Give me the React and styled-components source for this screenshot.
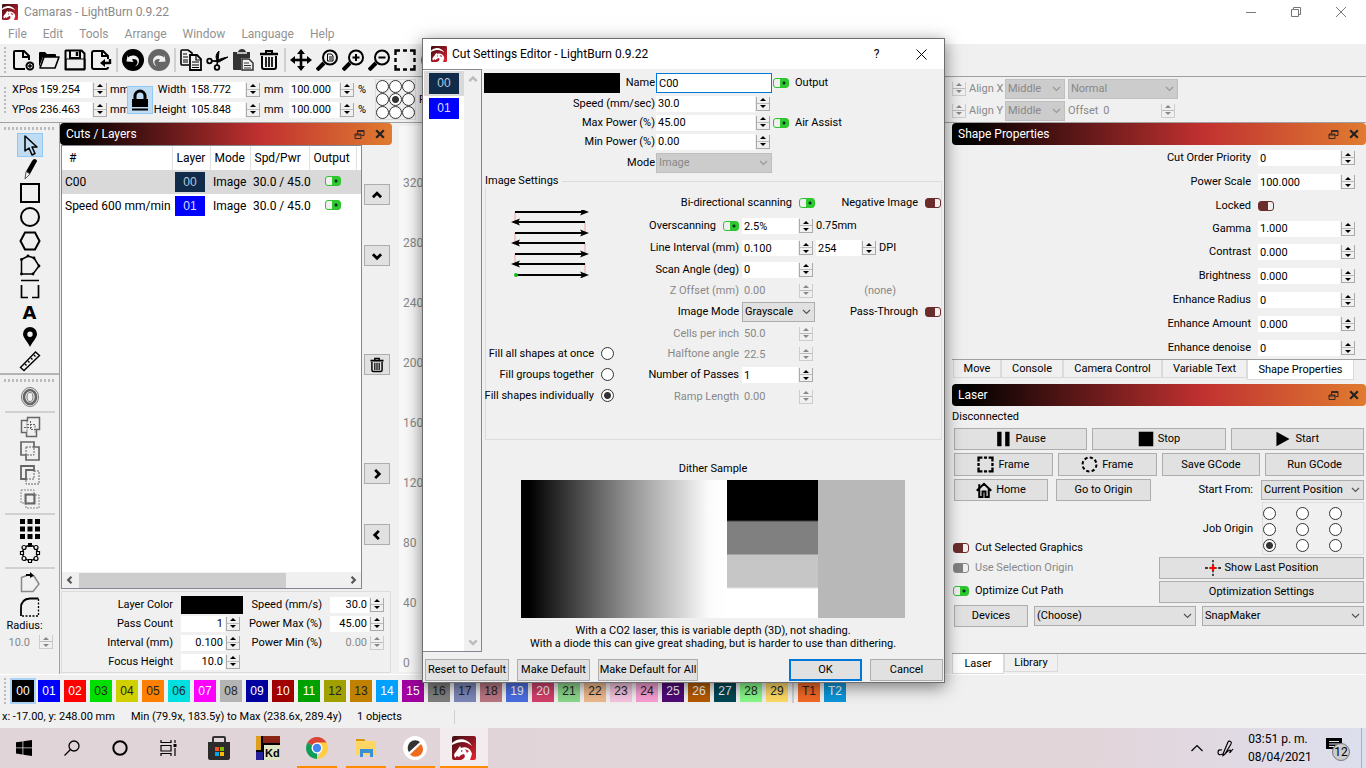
import React from 'react';
import styled, {createGlobalStyle, css} from 'styled-components';

const GlobalStyle = createGlobalStyle`
  *, *::before, *::after {
    box-sizing: border-box;
  }

  body {
    margin: 0;
    background: #f0f0f0;
    color: #000;
    font-family: Roboto, "Noto Sans", sans-serif;
    font-size: 11px;
    line-height: 14px;
  }

  input, select, button {
    font: inherit;
    color: inherit;
    margin: 0;
  }

  svg {
    display: block;
    flex: none;
  }
`;

const palette = [
    ['00', '#000000', '#fff'],
    ['01', '#0000ff', '#fff'],
    ['02', '#ff0000', '#fff'],
    ['03', '#00e000', '#222'],
    ['04', '#d0d000', '#222'],
    ['05', '#ff8000', '#222'],
    ['06', '#00e0e0', '#222'],
    ['07', '#ff00ff', '#fff'],
    ['08', '#b4b4b4', '#222'],
    ['09', '#0000a0', '#fff'],
    ['10', '#a00000', '#fff'],
    ['11', '#00a000', '#fff'],
    ['12', '#a0a000', '#222'],
    ['13', '#c08000', '#222'],
    ['14', '#00a0ff', '#fff'],
    ['15', '#a000a0', '#fff'],
    ['16', '#808080', '#222'],
    ['17', '#7d87b9', '#222'],
    ['18', '#bb7784', '#222'],
    ['19', '#4a6fe3', '#fff'],
    ['20', '#d33f6a', '#fff'],
    ['21', '#8cd78c', '#222'],
    ['22', '#f0b98d', '#222'],
    ['23', '#f6c4e1', '#222'],
    ['24', '#fa9ed4', '#222'],
    ['25', '#500a78', '#fff'],
    ['26', '#b45a00', '#fff'],
    ['27', '#004754', '#fff'],
    ['28', '#86fa88', '#222'],
    ['29', '#ffdb66', '#222'],
];

const toolPalette = [
    ['T1', '#f36926', '#222'],
    ['T2', '#0c96d9', '#fff'],
];

/* ---------- icons ---------- */

const line = {fill: 'none', stroke: 'currentColor', strokeWidth: 2};

const glyphs = {
    newFile: (
        <g {...line}>
            <path d="M13 20H4a2 2 0 0 1-2-2V3a1 1 0 0 1 1-1h9l5 5v4"/>
            <path d="M11 2v6h6"/>
            <circle cx="18" cy="17" r="3.5"/>
            <path d="M18 15v4M16 17h4" strokeWidth="1.4"/>
        </g>
    ),
    open: (
        <g>
            <path d="M1 18V4q0-1 1-1h5l2 2h8q1 0 1 1v2H5z" fill="currentColor"/>
            <path d="M2 19 6 8h15l-4 11z" {...line} strokeWidth="1.6" strokeLinejoin="round"/>
        </g>
    ),
    save: (
        <g {...line}>
            <path d="M2 1.5h15.5l3 3v16h-19V2z" strokeLinejoin="round"/>
            <path d="M2 10h19v10H2z" fill="none" strokeWidth="1"/>
            <path d="M6 2v7h10V2"/>
            <path d="M13 3v4" strokeWidth="2.5"/>
        </g>
    ),
    importFile: (
        <g {...line}>
            <path d="M18 10V7l-5-5H4a2 2 0 0 0-2 2v14a2 2 0 0 0 2 2h12a2 2 0 0 0 2-2"/>
            <path d="M12 2v5h6"/>
            <path d="M13 14h7M20 10v5" strokeWidth="2.4"/>
            <path d="m15 10-5 4 5 4z" fill="currentColor" stroke="none"/>
        </g>
    ),
    undo: (
        <g>
            <circle cx="11" cy="11" r="11" fill="currentColor"/>
            <path d="M6 8.5C9 5 17 6 17 12c0 3-2 5-4 5.5 6-5 0-9-3-7l1.5 2.5-7-.5 1-6.5z" fill="#f0f0f0"/>
        </g>
    ),
    redo: (
        <g>
            <circle cx="11" cy="11" r="11" fill="#666"/>
            <path d="M16 8.5C13 5 5 6 5 12c0 3 2 5 4 5.5-6-5 0-9 3-7L10.5 13l7-.5-1-6.5z" fill="#f0f0f0"/>
        </g>
    ),
    copy: (
        <g {...line} strokeWidth="1.6">
            <path d="M9 16H2q-1 0-1-1V2q0-1 1-1h6l4 3v2"/>
            <path d="M3 5h4M3 8h5M3 11h5M3 13h5" strokeWidth="1.2"/>
            <path d="M10 6h7l4 4v11H10z" strokeWidth="1.8"/>
            <path d="M16 6v5h5M12 13h7M12 16h7M12 18.5h7" strokeWidth="1.2"/>
        </g>
    ),
    cut: (
        <g {...line} strokeWidth="1.8">
            <circle cx="3.5" cy="12" r="2.3"/>
            <circle cx="11" cy="18.5" r="2.3"/>
            <path d="M6 12c5 0 9-3 16-4l-9 5-7-1" fill="currentColor" strokeWidth="1"/>
            <path d="M11 16V12l-1-4c0-3 2-5 3-6l-1 10-1 4" fill="currentColor" strokeWidth="1"/>
        </g>
    ),
    paste: (
        <g>
            <path d="M1 3h5q1-3 4-3t4 3h4v6h-9v12H2q-1 0-1-1z" fill="#333"/>
            <path d="M5 4h10" stroke="#f0f0f0" strokeWidth="1.5"/>
            <path d="M10 10h7l4 4v7H10z" fill="#f0f0f0" stroke="#333" strokeWidth="1.5"/>
            <path d="M12 14h5M12 16.5h7M12 19h7" stroke="#333" strokeWidth="1.2"/>
        </g>
    ),
    trash: (
        <g {...line}>
            <path d="M2 5h18" strokeWidth="2.5"/>
            <path d="M8 4V2h6v2M4 7v11q0 2 2 2h10q2 0 2-2V7"/>
            <path d="M8 8v10M11 8v10M14 8v10" strokeWidth="1.7"/>
        </g>
    ),
    move: (
        <g fill="currentColor">
            <path d="M9.7 4h2.6v14H9.7z"/>
            <path d="M4 9.7h14v2.6H4z"/>
            <path d="m11 0 4 5H7zM11 22l4-5H7zM0 11l5-4v8zM22 11l-5-4v8z"/>
        </g>
    ),
    zoomPage: (
        <g {...line}>
            <circle cx="14" cy="8.5" r="7"/>
            <path d="m8 14-7 7" strokeWidth="4"/>
            <path d="M11.5 5h4l1.5 2v5h-5.5zM13 8h3M13 10h3" strokeWidth="1"/>
        </g>
    ),
    zoomIn: (
        <g {...line}>
            <circle cx="14" cy="8.5" r="7"/>
            <path d="m8 14-7 7" strokeWidth="4"/>
            <path d="M14 5v7M10.5 8.5h7"/>
        </g>
    ),
    zoomOut: (
        <g {...line}>
            <circle cx="14" cy="8.5" r="7"/>
            <path d="m8 14-7 7" strokeWidth="4"/>
            <path d="M10.5 8.5h7"/>
        </g>
    ),
    frame: (
        <path d="M1.5 6V1.5H6M9 1.5h4M16 1.5h4.5V6M20.5 9v4M20.5 16v4.5H16M13 20.5H9M6 20.5H1.5V16M1.5 13V9"
              {...line} strokeWidth="2.4"/>
    ),
    camera: <circle cx="11" cy="11" r="10" fill="#666"/>,
    lock: (
        <g>
            <path d="M3 10h16v8H3z" fill="currentColor"/>
            <path d="M6 11V7a5 5 0 0 1 10 0v4" {...line} strokeWidth="3"/>
            <path d="M3 20.5h16" stroke="currentColor" strokeWidth="2"/>
        </g>
    ),
    cursor: <path d="M6 2v15l4-3 3 7 3-1.5-3-6.5h5z" {...line} strokeWidth="1.5" strokeLinejoin="round"/>,
    pencil: (
        <g>
            <path d="M13 3q2-3 4-1.5T17 5l-6 11-4-2.5z" fill="currentColor"/>
            <path d="m7 13.5 4 2.5-5 5z" fill="none" stroke="#555" strokeWidth="1"/>
        </g>
    ),
    square: <path d="M2 2h18v18H2z" {...line}/>,
    circle: <circle cx="11" cy="11" r="9" {...line}/>,
    hexagon: <path d="M1.5 11 6 2.5h10l4.5 8.5-4.5 8.5H6z" {...line}/>,
    polygon: (
        <g>
            <path d="M2.5 5.5 9 2l6 2 5 8-6 8H2.5z" {...line} strokeWidth="1.5"/>
            <g fill="currentColor">
                <circle cx="2.5" cy="5.5" r="1.4"/>
                <circle cx="9" cy="2" r="1.4"/>
                <circle cx="15" cy="4" r="1.4"/>
                <circle cx="20" cy="12" r="1.4"/>
                <circle cx="14" cy="20" r="1.4"/>
                <circle cx="2.5" cy="20" r="1.4"/>
            </g>
        </g>
    ),
    frameTool: <path d="M2 2.5h18M2.5 7v12.5H9M13 19.5h6.5V7" {...line} strokeWidth="1.7"/>,
    pin: (
        <path d="M11 1a7 7 0 0 0-7 7c0 4 5 8 7 13 2-5 7-9 7-13a7 7 0 0 0-7-7zm0 4.5a2.7 2.7 0 1 1 0 5.4 2.7 2.7 0 0 1 0-5.4z"
              fill="currentColor" fillRule="evenodd"/>
    ),
    ruler: (
        <g {...line} strokeWidth="1.4">
            <path d="m1.5 17.5 15-15.5 4 3.5-15.5 15z"/>
            <path d="m6 14 1.5 1.5M9 11l1.5 1.5M12 8l1.5 1.5M15 5l1.5 1.5"/>
        </g>
    ),
    offset: (
        <g fill="none" stroke="#777">
            <ellipse cx="11" cy="11" rx="8.5" ry="9.5"/>
            <ellipse cx="11" cy="11" rx="6" ry="7" strokeWidth="2.6" stroke="#666"/>
            <ellipse cx="11" cy="11" rx="3" ry="4.5"/>
        </g>
    ),
    weld: (
        <g fill="none" stroke="#666">
            <path d="M2.5 4.5h6v-3h12v12h-3v7h-10v-4h-5z" strokeWidth="1.5"/>
            <path d="M8 4.5v12M8 8.5h8v8M11.5 5v8.5H17M5 11.5h9" strokeDasharray="2 1"/>
        </g>
    ),
    union: (
        <g fill="none" stroke="#666">
            <path d="M2 2h13v5h5v13H7v-5H2z" strokeWidth="1.7"/>
            <path d="M7 7h8v8H7z" strokeDasharray="2 1"/>
        </g>
    ),
    subtract: (
        <g fill="none" stroke="#666">
            <path d="M2 2h13v4H7v9H2z" strokeWidth="1.8"/>
            <path d="M15 7h5v13H7v-5h8z" strokeDasharray="2 1"/>
        </g>
    ),
    intersect: (
        <g fill="none" stroke="#666">
            <path d="M2 2h13v13H2zM7 7h13v13H7z" strokeDasharray="2 1" stroke="#888"/>
            <path d="M6.5 6.5h9v9h-9z" strokeWidth="2"/>
        </g>
    ),
    grid: (
        <path d="M1 1h5v5H1zM8.5 1h5v5h-5zM16 1h5v5h-5zM1 8.5h5v5H1zM8.5 8.5h5v5h-5zM16 8.5h5v5h-5zM1 16h5v5H1zM8.5 16h5v5h-5zM16 16h5v5h-5z"
              fill="currentColor"/>
    ),
    radial: (
        <g>
            <circle cx="11" cy="11" r="7.5" {...line} strokeWidth="1.4"/>
            <g fill="#f0f0f0" stroke="currentColor" strokeWidth="1.2">
                <circle cx="5" cy="5.5" r="2"/>
                <circle cx="17" cy="5.5" r="2"/>
                <circle cx="5" cy="16.5" r="2"/>
                <circle cx="17" cy="16.5" r="2"/>
                <path d="M1.5 9.5h3v3h-3zM17.5 9.5h3v3h-3zM9.5 17.5h3v3h-3z"/>
            </g>
            <path d="M9 1h4v4H9z" fill="currentColor"/>
        </g>
    ),
    startPoint: (
        <g>
            <path d="M2.5 5.5 9 3l6 1 5 8-6 7.5H2.5z" fill="none" stroke="#888" strokeWidth="1.5"/>
            <path d="M7 2h4V0l4 3.5-4 2.5V4H7z" fill="currentColor"/>
        </g>
    ),
    corner: (
        <g {...line} strokeWidth="1.5">
            <path d="M2 20v-8Q2 3 11 2.5h8.5" strokeWidth="1.8"/>
            <path d="M19.5 3v17H3" strokeDasharray="2 1.5" strokeWidth="1.3"/>
        </g>
    ),
    up: <path d="m6.5 13.5 4.5-4.5 4.5 4.5" {...line} strokeWidth="3"/>,
    down: <path d="m6.5 9 4.5 4.5L15.5 9" {...line} strokeWidth="3"/>,
    right: <path d="m9 6.5 4.5 4.5L9 15.5" {...line} strokeWidth="3"/>,
    left: <path d="M13 6.5 8.5 11l4.5 4.5" {...line} strokeWidth="3"/>,
    float: (
        <g fill="none" stroke="#222" strokeWidth="1.8">
            <path d="M7 10V3h13v10h-5"/>
            <path d="M2 10h12v9H2zM7 5h13M2 12h12"/>
        </g>
    ),
    close: <path d="m4 4 14 14M18 4 4 18" stroke="#222" strokeWidth="4" fill="none"/>,
    pause: <path d="M3 1h6v20H3zM14 1h6v20h-6z" fill="currentColor"/>,
    stop: <path d="M1 1h20v20H1z" fill="currentColor"/>,
    play: <path d="m2 1 18 10L2 21z" fill="currentColor"/>,
    frameBox: <path d="M2 7V2h5M9 2h4M15 2h5v5M20 15v5h-5M13 20H9M7 20H2v-5M2 13V9M20 13V9" {...line} strokeWidth="3"/>,
    frameRound: <circle cx="11" cy="11" r="9" {...line} strokeWidth="2.6" strokeDasharray="4.2 2.87"/>,
    home: (
        <g {...line} strokeWidth="2.8">
            <path d="M1 12 11 2.5 21 12M4.5 10v10.5H9V13h4v7.5h4.5V10"/>
            <path d="M4.5 3v6"/>
        </g>
    ),
    target: (
        <g fill="none" stroke="currentColor" strokeWidth="1.8">
            <path d="M0 11h4M6 11h3M13 11h3M18 11h4M11 0v3M11 5v3M11 14v3M11 19v3"/>
            <path d="M7 11h8M11 7v8" stroke="red" strokeWidth="3"/>
        </g>
    ),
};

const Icon = ({name, size = 22}) => (
    <svg width={size} height={size} viewBox="0 0 22 22" aria-hidden="true">{glyphs[name]}</svg>
);

const Logo = ({size = 16}) => (
    <svg width={size} height={size} viewBox="0 0 24 24" aria-hidden="true">
        <defs>
            <linearGradient id="logoRed" x1="0" x2="1" y1="0" y2="1">
                <stop offset="0" stopColor="#3c1014"/>
                <stop offset="0.5" stopColor="#8c1522"/>
                <stop offset="1" stopColor="#ee2230"/>
            </linearGradient>
        </defs>
        <rect width="24" height="24" rx="2" fill="url(#logoRed)"/>
        <path d="M0 7C6 1 16 2 20 10 14 5 8 5 0 9z" fill="#fff"/>
        <path d="M2 19c1-3 3-4 4-6l2-3 1 2c5-2 10 1 11 6l-2 6H9c3-1 5-3 3-6l-3 1-2 2-2-1-2 2z" fill="#fff"/>
        <path d="m13 13 4 2-2 2zM9 14l2 1-2 1z" fill="#b82a3a"/>
    </svg>
);

const ScanPattern = () => {
    const rows = [2, 12, 23, 33, 44, 54, 65];
    return (
        <svg width="78" height="68" viewBox="0 0 78 68" aria-hidden="true">
            <path d="M4 2v10M74 12v11M4 23v10M74 33v11M4 44v10M74 54v11" stroke="#f5a0a0" fill="none"/>
            {rows.map((y, i) => (
                <g key={y}>
                    <path d={`M4 ${y}h70`} stroke="#000" strokeWidth="2"/>
                    <path d={i % 2 ? `m0 ${y} 9-3.5-2 3.5 2 3.5z` : `m78 ${y}-9-3.5 2 3.5-2 3.5z`}/>
                </g>
            ))}
            <circle cx="5" cy="65" r="2" fill="#1b1"/>
        </svg>
    );
};

/* ---------- shared controls ---------- */

const Label = styled.label`
  white-space: nowrap;
  text-align: ${(p) => p.$align || 'right'};
  width: ${(p) => p.$width || 'auto'};
  color: ${(p) => (p.$off ? '#888' : 'inherit')};
`;

const SpinWrap = styled.div`
  display: flex;
  align-items: center;
  gap: 1px;
  width: ${(p) => p.$width};
  color: ${(p) => (p.$off ? '#888' : '#000')};
`;

const SpinInput = styled.input`
  flex: 1;
  min-width: 0;
  width: 0;
  height: 16px;
  padding: 0 2px;
  border: 0;
  background: ${(p) => (p.disabled ? 'transparent' : '#fff')};
  text-align: ${(p) => p.$align || 'left'};
  outline: none;
`;

const Arrows = styled.div`
  display: flex;
  flex-direction: column;
  flex: none;
  width: 14px;
  height: 14px;
  border: 1px solid ${(p) => (p.$off ? '#ccc' : '#aaa')};
  border-top: 0;
`;

const ArrowButton = styled.button`
  flex: 1;
  display: flex;
  align-items: center;
  justify-content: center;
  padding: 0;
  border: 0;
  background: #f0f0f0;

  & + & {
    border-top: 1px solid #bbb;
  }
`;

const Stepper = ({off}) => (
    <Arrows $off={off}>
        <ArrowButton disabled={off} aria-label="Increase">
            <svg width="6" height="3" viewBox="0 0 6 3"><path d="M0 3 3 0l3 3z" fill="currentColor"/></svg>
        </ArrowButton>
        <ArrowButton disabled={off} aria-label="Decrease">
            <svg width="6" height="3" viewBox="0 0 6 3"><path d="m0 0 3 3 3-3z" fill="currentColor"/></svg>
        </ArrowButton>
    </Arrows>
);

const SpinBox = ({id, label, value, width, align, off}) => (
    <SpinWrap $width={width} $off={off}>
        <SpinInput id={id} aria-label={label} defaultValue={value} disabled={off} $align={align}/>
        <Stepper off={off}/>
    </SpinWrap>
);

const SelectWrap = styled.div`
  display: grid;
  align-items: center;
  width: ${(p) => p.$width || 'auto'};
  flex: ${(p) => (p.$width ? 'none' : 1)};
  color: ${(p) => (p.$off ? '#888' : '#000')};

  & > select, & > svg {
    grid-area: 1 / 1;
  }

  & > svg {
    justify-self: end;
    margin-right: 4px;
    pointer-events: none;
  }
`;

const SelectBox = styled.select`
  appearance: none;
  width: 100%;
  height: 20px;
  padding: 0 2px;
  border: 1px solid ${(p) => (p.disabled ? '#bfbfbf' : '#adadad')};
  border-radius: 0;
  background: ${(p) => (p.disabled ? '#ccc' : '#e1e1e1')};
  opacity: 1;
`;

const Select = ({id, label, value, width, off}) => (
    <SelectWrap $width={width} $off={off}>
        <SelectBox id={id} aria-label={label} disabled={off}>
            <option>{value}</option>
        </SelectBox>
        <svg width="9" height="6" viewBox="0 0 9 6">
            <path d="m1 1 3.5 3.5L8 1" fill="none" stroke={off ? '#999' : '#555'} strokeWidth="1.2"/>
        </svg>
    </SelectWrap>
);

const Toggle = styled.input.attrs({type: 'checkbox'})`
  appearance: none;
  flex: none;
  width: 16px;
  height: 10px;
  border: 1px solid ${(p) => (p.disabled ? '#888' : '#6b2c2c')};
  border-radius: 3px;
  background: linear-gradient(90deg, ${(p) => (p.disabled ? '#808080' : '#6b2c2c')} 9px, #f4eeee 9px);

  &:checked {
    border-color: #2fc42f;
    background:
      radial-gradient(circle at 10px 4px, #032 1px, transparent 2px),
      linear-gradient(90deg, #f0f0f0 6px, #2fc92f 6px);
  }
`;

const Radio = styled.input.attrs({type: 'radio'})`
  appearance: none;
  flex: none;
  width: 13px;
  height: 13px;
  border: 1px solid #333;
  border-radius: 50%;
  background: #fff;

  &:checked {
    background: radial-gradient(circle, #333 3px, #fff 4px);
  }
`;

const Button = styled.button`
  display: flex;
  align-items: center;
  justify-content: center;
  gap: 4px;
  flex: ${(p) => (p.$width ? 'none' : 1)};
  width: ${(p) => p.$width || 'auto'};
  height: ${(p) => p.$height || '22px'};
  padding: 0;
  border: ${(p) => (p.$primary ? '2px solid #0078d7' : '1px solid #adadad')};
  background: #e1e1e1;
  white-space: nowrap;
`;

const IconButton = styled.button`
  display: flex;
  align-items: center;
  justify-content: center;
  flex: none;
  width: 26px;
  height: 24px;
  padding: 0;
  border: 1px solid ${(p) => (p.$active ? '#90c8f6' : 'transparent')};
  background: ${(p) => (p.$active ? '#c0dcf3' : 'transparent')};
`;

const Swatch = styled.span`
  display: block;
  width: ${(p) => p.$width || '30px'};
  height: ${(p) => p.$height || '20px'};
  background: ${(p) => p.$color};
  color: ${(p) => p.$ink || '#fff'};
  font-family: "Liberation Sans", Arial, sans-serif;
  font-size: 12px;
  line-height: 20px;
  text-align: center;
`;

/* ---------- window frame ---------- */

const Screen = styled.div`
  position: relative;
  display: flex;
  flex-direction: column;
  min-height: 100vh;
  overflow: hidden;
`;

const TitleBar = styled.header`
  display: flex;
  align-items: center;
  height: 24px;
  padding: 0 3px 0 2px;
  gap: 6px;
  background: #fff;
  color: #8a8a8a;
  font-size: 12px;
`;

const WindowButtons = styled.div`
  display: flex;
  margin-left: auto;

  & button {
    display: flex;
    align-items: center;
    justify-content: center;
    width: 45px;
    height: 22px;
    padding: 0;
    border: 0;
    background: transparent;
  }
`;

const MenuBar = styled.nav`
  display: flex;
  align-items: center;
  gap: 16px;
  height: 20px;
  padding-left: 8px;
  background: #fff;
  color: #929292;
  font-size: 12px;

  & a {
    color: inherit;
    text-decoration: none;
  }
`;

const Toolbar = styled.div`
  display: flex;
  align-items: center;
  height: 33px;
  border-bottom: 1px solid #a0a0a0;
`;

const acrossHandle = css`
  width: 52px;
  height: 3px;
  margin: 4px 4px 3px;
  background: repeating-linear-gradient(90deg, #bbb 0 2px, transparent 2px 4px);
`;

const uprightHandle = css`
  width: 2px;
  height: 26px;
  margin: 0 4px;
  background: repeating-linear-gradient(#bbb 0 2px, transparent 2px 4px);
`;

const Handle = styled.i`
  flex: none;
  ${(p) => (p.$across ? acrossHandle : uprightHandle)}
`;

const acrossDivider = css`
  width: 50px;
  height: 2px;
  margin: 2px auto;
`;

const uprightDivider = css`
  width: 2px;
  height: 24px;
  margin: 0 2px;
`;

const Divider = styled.i`
  flex: none;
  background: #d0d0d0;
  ${(p) => (p.$across ? acrossDivider : uprightDivider)}
`;

const toolbarGroups = [
    ['newFile', 'open', 'save', 'importFile'],
    ['undo', 'redo'],
    ['copy', 'cut', 'paste', 'trash'],
    ['move', 'zoomPage', 'zoomIn', 'zoomOut', 'frame', 'camera'],
];

const TransformBar = styled.div`
  display: flex;
  align-items: center;
  height: 46px;
  border-bottom: 1px solid #a0a0a0;
`;

const Pair = styled.div`
  display: grid;
  grid-auto-rows: 20px;
  align-items: center;
  justify-items: ${(p) => p.$justify || 'start'};
  flex: none;
  width: ${(p) => p.$width};
  margin-left: ${(p) => p.$gap || 0};
`;

const LockButton = styled(IconButton)`
  height: 28px;
`;

const AnchorGrid = styled.div`
  display: grid;
  grid-template-columns: repeat(3, 13px);
  margin-left: 8px;
  outline: 1px solid #dcdcdc;
`;

const AlignGroup = styled.div`
  display: flex;
  flex-direction: column;
  gap: 2px;
  width: 414px;
  margin-left: auto;
  color: #888;
`;

const AlignRow = styled.div`
  display: flex;
  align-items: center;
  gap: 3px;
  height: 20px;
`;

/* ---------- left ---------- */

const Workspace = styled.main`
  display: flex;
  flex: 1;
`;

const ToolColumn = styled.aside`
  display: flex;
  flex-direction: column;
  flex: none;
  width: 60px;
  border-right: 1px solid #a0a0a0;
`;

const ToolSet = styled.div`
  display: flex;
  flex-direction: column;
  align-items: center;
  border-bottom: ${(p) => (p.$last ? 0 : '2px solid #b4b4b4')};
`;

const BigLetter = styled.b`
  font-family: "DejaVu Sans", sans-serif;
  font-size: 18px;
  line-height: 22px;
`;

const RadiusField = styled.div`
  display: flex;
  flex-direction: column;
  gap: 1px;
  width: 46px;
`;

const Dock = styled.section`
  display: flex;
  flex-direction: column;
  flex: none;
  width: ${(p) => p.$width};
`;

const DockHeader = styled.header`
  display: flex;
  align-items: center;
  gap: 9px;
  height: 22px;
  padding: 0 6px;
  border-radius: 4px;
  background: linear-gradient(90deg, #000 3%, #c03030 60%, #e07b30);
  color: #fff;
  font-size: 12px;

  & span {
    flex: 1;
  }

  & button {
    padding: 0;
    border: 0;
    background: transparent;
  }
`;

const DockTitle = ({children}) => (
    <DockHeader>
        <span>{children}</span>
        <button aria-label="Float"><Icon name="float" size={11}/></button>
        <button aria-label="Close"><Icon name="close" size={12}/></button>
    </DockHeader>
);

const LayersBody = styled.div`
  display: flex;
  flex: 1;
  margin-bottom: 2px;
`;

const ListBox = styled.div`
  display: flex;
  flex-direction: column;
  flex: 1;
  margin-left: 1px;
  border: 1px solid #828790;
  background: #fff;
`;

const LayerTable = styled.table`
  width: 100%;
  table-layout: fixed;
  border-collapse: collapse;
  font-size: 12px;

  & th, & td {
    height: 24px;
    padding: 0 3px;
    font-weight: normal;
    text-align: left;
    white-space: nowrap;
  }

  & th {
    padding-left: 4px;
    border-right: 1px solid #e0e0e0;
  }

  & th:first-child {
    padding-left: 7px;
  }

  & td:nth-child(5) {
    text-align: center;
  }
`;

const LayerRow = styled.tr`
  background: ${(p) => (p.$selected ? '#d9d9d9' : '#fff')};
`;

const ScrollTrack = styled.div`
  display: flex;
  align-items: center;
  gap: 1px;
  height: 16px;
  margin-top: auto;
  background: #f0f0f0;

  & button {
    width: 16px;
    padding: 0;
    border: 0;
    background: transparent;
    color: #555;
  }

  & i {
    width: 207px;
    height: 15px;
    margin-right: auto;
    background: #cdcdcd;
  }
`;

const OrderButtons = styled.div`
  display: flex;
  flex-direction: column;
  gap: 40px;
  width: 30px;
  padding: 39px 2px 0;
`;

const OrderButton = styled(Button)`
  flex: none;
  height: 21px;
  width: 26px;
  margin-top: ${(p) => (p.$apart ? '48px' : 0)};
`;

const QuickSettings = styled.div`
  display: grid;
  grid-template-columns: 111px 60px 73px 54px;
  column-gap: 8px;
  grid-auto-rows: 19px;
  align-items: center;
  margin: 0 1px 1px;
  padding: 3px 0 1px;
  border: 1px solid #dcdcdc;

  & > label, & > span:first-child {
    justify-self: end;
  }
`;

/* ---------- canvas ---------- */

const Canvas = styled.section`
  flex: 1;
  display: flex;
  flex-direction: column;
  gap: 42px;
  min-width: 200px;
  margin: 3px 8px 2px 7px;
  padding: 48px 4px 0;
  background: #f8f8f8;
  color: #888;
  font-size: 12px;
  line-height: 18px;
`;

/* ---------- right docks ---------- */

const PropertyList = styled.div`
  display: grid;
  grid-template-columns: 1fr 97px;
  column-gap: 7px;
  grid-template-rows: 24px 24px 23px 23px repeat(5, 24px);
  align-items: center;
  height: 214px;
  padding-top: 1px;
  padding-right: 11px;
`;

const Tabs = styled.div`
  display: flex;
  align-items: flex-start;
  height: ${(p) => p.$height};
  margin-top: ${(p) => (p.$bottom ? 'auto' : 0)};
  padding-left: ${(p) => p.$inset || 0};
  border-top: 1px solid #a0a0a0;
`;

const Tab = styled.button`
  width: ${(p) => p.$width};
  height: ${(p) => (p.$active ? '20px' : '18px')};
  padding: 0;
  border: 1px solid #dadada;
  border-top: 0;
  background: ${(p) => (p.$active ? '#fff' : 'transparent')};
`;

const LaserBody = styled.div`
  display: flex;
  flex-direction: column;
  padding: 4px 1px 0 0;
`;

const Status = styled.p`
  margin: 0 0 4px;
`;

const LaserRow = styled.div`
  display: flex;
  align-items: center;
  gap: ${(p) => p.$gap || '5px'};
  padding: 0 1px 0 2px;
  margin-bottom: ${(p) => p.$below || '3px'};
`;

const OriginRow = styled.div`
  display: grid;
  grid-template-columns: 205px 1fr;
  margin-bottom: 2px;
`;

const ToggleList = styled.div`
  display: grid;
  grid-template-rows: 20px 20px 25px;
  align-content: end;
  align-items: center;

  & label {
    display: flex;
    align-items: center;
    gap: 6px;
    padding-left: 1px;
  }
`;

const OriginSide = styled.div`
  display: flex;
  flex-direction: column;
  gap: 2px;
`;

const JobOrigin = styled.div`
  display: flex;
  align-items: center;
  justify-content: flex-end;
  gap: 9px;
  padding-right: 1px;
`;

const OriginGrid = styled.div`
  display: grid;
  grid-template-columns: repeat(3, 33px);
  grid-auto-rows: 16px;
  align-items: center;
  width: 102px;
  height: 53px;
  padding-top: 2px;
  border: 1px solid #dcdcdc;
`;

/* ---------- bottom ---------- */

const PaletteBar = styled.div`
  display: flex;
  align-items: center;
  gap: 4px;
  height: 31px;
  border-top: 1px solid #fff;
  padding-top: 2px;

  & > i {
    margin: 0;
  }

  & > i:first-child {
    margin: 0 2px 0 4px;
  }
`;

const ColorChip = styled.button`
  flex: none;
  width: 22px;
  height: 22px;
  padding: 0;
  border: 0;
  outline: ${(p) => (p.$active ? '2px solid #a9d2f5' : 'none')};
  background: ${(p) => p.$color};
  color: ${(p) => p.$ink};
  font-family: "Liberation Sans", Arial, sans-serif;
  font-size: 12px;
`;

const StatusBar = styled.footer`
  display: grid;
  grid-template-columns: 121px 218px 98px;
  align-items: center;
  gap: 8px;
  height: 23px;
  padding: 3px 0 3px 2px;

  & span:last-of-type {
    border-right: 1px solid #d0d0d0;
  }
`;

const Taskbar = styled.footer`
  display: flex;
  align-items: center;
  height: 40px;
  background: linear-gradient(90deg, #e0d4d9, #e2d5da 80%, #e0dbe6 93%, #dcdfee);
`;

const TaskSlot = styled.button`
  display: flex;
  align-items: center;
  justify-content: center;
  width: 48px;
  height: 40px;
  margin-left: ${(p) => p.$gap || 0};
  padding: 0;
  border: 0;
  background: ${(p) => (p.$active ? '#f2ecef' : 'transparent')};
  box-shadow: ${(p) => (p.$active ? 'inset 0 -2px #ff8c00' : 'none')};
`;

const RunningSlot = styled(TaskSlot)`
  width: 40px;
  margin: 0 4px 0 5px;
  box-shadow: inset 0 -2px #ff8c00;
`;

const Tray = styled.div`
  display: flex;
  align-items: center;
  gap: 14px;
  margin-left: auto;
  height: 40px;
  padding-right: 10px;
  margin-right: 4px;
  border-right: 1px solid #a9abc0;
`;

const Clock = styled.time`
  width: 60px;
  margin-right: 3px;
  font-size: 12px;
  line-height: 18px;
  text-align: center;
  white-space: nowrap;
`;

/* ---------- dialog ---------- */

const Dialog = styled.section`
  position: absolute;
  top: 38px;
  left: 422px;
  display: flex;
  flex-direction: column;
  width: 523px;
  border: 1px solid #6e6e6e;
  background: #f0f0f0;
  box-shadow: 0 4px 16px rgba(0, 0, 0, 0.5);
`;

const DialogTitle = styled.header`
  display: flex;
  align-items: center;
  gap: 5px;
  height: 30px;
  padding-left: 8px;
  background: #fff;
  font-size: 12px;
`;

const DialogBody = styled.div`
  display: flex;
  height: 583px;
`;

const LayerList = styled.div`
  display: flex;
  width: 59px;
  border: 1px solid #828790;
  border-left: 0;
  background: #fff;
`;

const LayerItems = styled.div`
  flex: 1;
  display: flex;
  flex-direction: column;
  padding-top: 1px;
`;

const LayerItem = styled.button`
  display: flex;
  width: 40px;
  height: 25px;
  margin-left: 1px;
  padding: 2px 5px;
  border: 0;
  background: ${(p) => (p.$selected ? '#d9d9d9' : 'transparent')};
`;

const ListScroll = styled.div`
  display: flex;
  flex-direction: column;
  justify-content: space-between;
  align-items: center;
  width: 17px;
  background: #f0f0f0;
  color: #bbb;
`;

const Settings = styled.div`
  display: flex;
  flex-direction: column;
  flex: 1;
  padding: 4px 2px 0;
`;

const TopSettings = styled.div`
  display: grid;
  grid-template-columns: 136px 34px 116px 1fr;
  grid-template-rows: 20px 21px 17px 21px 21px;
  align-items: center;
  column-gap: 1px;
`;

const WideLabel = styled(Label)`
  grid-column: 1 / 3;
`;

const NameInput = styled.input`
  height: 20px;
  width: 116px;
  padding: 0 2px;
  border: 1px solid #0078d7;
  background: #fff;
  outline: none;
`;

const CheckLabel = styled.label`
  display: flex;
  align-items: center;
  gap: 6px;
  white-space: nowrap;
`;

const Group = styled.fieldset`
  display: flex;
  height: 266px;
  min-width: 0;
  margin: 1px 0 0 1px;
  padding: 0;
  border: 1px solid #dcdcdc;

  & legend {
    margin-left: -1px;
    padding: 0 3px 0 0;
  }
`;

const FillColumn = styled.div`
  display: flex;
  flex-direction: column;
  align-items: flex-end;
  width: 128px;
  padding-top: 22px;

  & > svg {
    margin-right: 25px;
    margin-bottom: 65px;
  }

  & label {
    display: flex;
    align-items: center;
    gap: 7px;
    height: 21px;
    white-space: nowrap;
  }
`;

const ImageGrid = styled.div`
  flex: 1;
  display: grid;
  grid-template-rows: 25px 22px 22px 21px 21px 22px 21px 20px 22px 21px;
  align-content: start;
  padding-top: 2px;
`;

const ImageRow = styled.div`
  display: flex;
  align-items: center;
  gap: 3px;
`;

const RightCheck = styled.label`
  display: flex;
  align-items: center;
  gap: 7px;
  margin-left: auto;
`;

const OverscanLabel = styled.label`
  display: flex;
  justify-content: flex-end;
  align-items: center;
  gap: 7px;
  width: 125px;
`;

const BidiLabel = styled(OverscanLabel)`
  width: 201px;
`;

const Sample = styled.div`
  display: flex;
  flex-direction: column;
  align-items: center;
  padding-top: 22px;
  text-align: center;
  line-height: 13px;
`;

const DitherImage = styled.div`
  display: grid;
  grid-template-columns: 206px 91px 87px;
  height: 138px;
  margin: 5px 0 6px;
  background: #b8b8b8;

  & i:first-child {
    background: linear-gradient(90deg, #000 4%, #5e5e5e 35%, #999 55%, #d5d5d5 78%, #fbfbfb 91%, #fff);
  }

  & i:last-child {
    background: linear-gradient(#000 40px, #808080 42px 74px, #c6c6c6 75px 107px, #fff 109px);
  }
`;

const DialogButtons = styled.footer`
  display: flex;
  gap: 8px;
  padding: 7px 1px 1px 2px;

  & button:nth-child(4) {
    margin-left: auto;
  }
`;

const paramRows = [
    ['Scan Angle (deg)', '0', false],
    ['Z Offset (mm)', '0.00', true, '(none)'],
    ['Image Mode', 'Grayscale', false],
    ['Cells per inch', '50.0', true],
    ['Halftone angle', '22.5', true],
    ['Number of Passes', '1', false],
    ['Ramp Length', '0.00', true],
];

const CutSettingsDialog = () => (
    <Dialog role="dialog" aria-labelledby="dialog-title">
        <DialogTitle>
            <Logo/>
            <span id="dialog-title">Cut Settings Editor - LightBurn 0.9.22</span>
            <WindowButtons>
                <button aria-label="Help">?</button>
                <button aria-label="Close">
                    <svg width="11" height="11" viewBox="0 0 11 11"><path d="m.5.5 10 10M10.5.5l-10 10" stroke="#000" fill="none"/></svg>
                </button>
            </WindowButtons>
        </DialogTitle>
        <DialogBody>
            <LayerList>
                <LayerItems>
                    <LayerItem $selected><Swatch $width="31px" $height="21px" $color="#112c4b" $ink="#b5c9de">00</Swatch></LayerItem>
                    <LayerItem><Swatch $width="31px" $height="21px" $color="#00f" $ink="#ddf">01</Swatch></LayerItem>
                </LayerItems>
                <ListScroll>
                    <Icon name="up" size={18}/>
                    <Icon name="down" size={18}/>
                </ListScroll>
            </LayerList>
            <Settings>
                <TopSettings>
                    <Swatch $width="136px" $color="#000"/>
                    <Label htmlFor="cut-name">Name</Label>
                    <NameInput id="cut-name" defaultValue="C00"/>
                    <CheckLabel><Toggle defaultChecked/>Output</CheckLabel>
                    <WideLabel htmlFor="cut-speed">Speed (mm/sec)</WideLabel>
                    <SpinBox id="cut-speed" value="30.0" width="114px"/>
                    <span/>
                    <WideLabel htmlFor="cut-max">Max Power (%)</WideLabel>
                    <SpinBox id="cut-max" value="45.00" width="114px"/>
                    <CheckLabel><Toggle defaultChecked/>Air Assist</CheckLabel>
                    <WideLabel htmlFor="cut-min">Min Power (%)</WideLabel>
                    <SpinBox id="cut-min" value="0.00" width="114px"/>
                    <span/>
                    <WideLabel htmlFor="cut-mode">Mode</WideLabel>
                    <Select id="cut-mode" value="Image" width="116px" off/>
                </TopSettings>
                <Group>
                    <legend>Image Settings</legend>
                    <FillColumn>
                        <ScanPattern/>
                        <label>Fill all shapes at once<Radio name="fill"/></label>
                        <label>Fill groups together<Radio name="fill"/></label>
                        <label>Fill shapes individually<Radio name="fill" defaultChecked/></label>
                    </FillColumn>
                    <ImageGrid>
                        <ImageRow>
                            <BidiLabel>Bi-directional scanning<Toggle defaultChecked/></BidiLabel>
                            <RightCheck>Negative Image<Toggle/></RightCheck>
                        </ImageRow>
                        <ImageRow>
                            <OverscanLabel>Overscanning<Toggle defaultChecked/></OverscanLabel>
                            <SpinBox label="Overscanning" value="2.5%" width="71px"/>
                            <span>0.75mm</span>
                        </ImageRow>
                        <ImageRow>
                            <Label $width="125px" htmlFor="interval">Line Interval (mm)</Label>
                            <SpinBox id="interval" value="0.100" width="71px"/>
                            <SpinBox id="dpi" value="254" width="60px"/>
                            <Label htmlFor="dpi">DPI</Label>
                        </ImageRow>
                        {paramRows.map(([label, value, off, note]) => (
                            <ImageRow key={label}>
                                <Label $width="125px" $off={off} htmlFor={label}>{label}</Label>
                                {label === 'Image Mode'
                                    ? <Select id={label} value={value} width="73px"/>
                                    : <SpinBox id={label} value={value} width="71px" off={off}/>}
                                {label === 'Image Mode' && <RightCheck>Pass-Through<Toggle/></RightCheck>}
                                {note && <Label as="span" $width="80px" $off>{note}</Label>}
                            </ImageRow>
                        ))}
                    </ImageGrid>
                </Group>
                <Sample>
                    <span>Dither Sample</span>
                    <DitherImage><i/><i/></DitherImage>
                    <span>With a CO2 laser, this is variable depth (3D), not shading.</span>
                    <span>With a diode this can give great shading, but is harder to use than dithering.</span>
                </Sample>
            </Settings>
        </DialogBody>
        <DialogButtons>
            <Button $width="84px">Reset to Default</Button>
            <Button $width="73px">Make Default</Button>
            <Button $width="100px">Make Default for All</Button>
            <Button $width="73px" $primary>OK</Button>
            <Button $width="73px">Cancel</Button>
        </DialogButtons>
    </Dialog>
);

const layers = [
    {name: 'C00', id: '00', color: '#112c4b', ink: '#b5c9de'},
    {name: 'Speed 600 mm/min', id: '01', color: '#0000ff', ink: '#ddddff'},
];

const LayersDock = () => (
    <Dock $width="332px">
        <DockTitle>Cuts / Layers</DockTitle>
        <LayersBody>
            <ListBox>
                <LayerTable>
                    <colgroup>
                        <col width="110"/>
                        <col width="38"/>
                        <col width="40"/>
                        <col width="59"/>
                        <col width="47"/>
                        <col/>
                    </colgroup>
                    <thead>
                        <tr><th>#</th><th>Layer</th><th>Mode</th><th>Spd/Pwr</th><th>Output</th></tr>
                    </thead>
                    <tbody>
                        {layers.map((layer, i) => (
                            <LayerRow key={layer.id} $selected={i === 0}>
                                <td>{layer.name}</td>
                                <td><Swatch $color={layer.color} $ink={layer.ink}>{layer.id}</Swatch></td>
                                <td>Image</td>
                                <td>30.0 / 45.0</td>
                                <td><Toggle defaultChecked aria-label={`Output ${layer.id}`}/></td>
                                <td/>
                            </LayerRow>
                        ))}
                    </tbody>
                </LayerTable>
                <ScrollTrack>
                    <button aria-label="Scroll left"><Icon name="left" size={16}/></button>
                    <i/>
                    <button aria-label="Scroll right"><Icon name="right" size={16}/></button>
                </ScrollTrack>
            </ListBox>
            <OrderButtons>
                <OrderButton aria-label="Move up"><Icon name="up" size={20}/></OrderButton>
                <OrderButton aria-label="Move down"><Icon name="down" size={20}/></OrderButton>
                <OrderButton aria-label="Delete" $apart><Icon name="trash" size={16}/></OrderButton>
                <OrderButton aria-label="Next" $apart><Icon name="right" size={20}/></OrderButton>
                <OrderButton aria-label="Previous"><Icon name="left" size={20}/></OrderButton>
            </OrderButtons>
        </LayersBody>
        <QuickSettings>
            <Label as="span">Layer Color</Label>
            <Swatch $width="62px" $height="18px" $color="#000"/>
            <Label htmlFor="q-speed">Speed (mm/s)</Label>
            <SpinBox id="q-speed" value="30.0" width="54px" align="right"/>
            <Label htmlFor="q-pass">Pass Count</Label>
            <SpinBox id="q-pass" value="1" width="59px" align="right"/>
            <Label htmlFor="q-max">Power Max (%)</Label>
            <SpinBox id="q-max" value="45.00" width="54px" align="right"/>
            <Label htmlFor="q-interval">Interval (mm)</Label>
            <SpinBox id="q-interval" value="0.100" width="59px" align="right"/>
            <Label htmlFor="q-min">Power Min (%)</Label>
            <SpinBox id="q-min" value="0.00" width="54px" align="right" off/>
            <Label htmlFor="q-focus">Focus Height</Label>
            <SpinBox id="q-focus" value="10.0" width="59px" align="right"/>
        </QuickSettings>
    </Dock>
);

const shapeProps = [
    ['Cut Order Priority', '0'],
    ['Power Scale', '100.000'],
    ['Locked', null],
    ['Gamma', '1.000'],
    ['Contrast', '0.000'],
    ['Brightness', '0.000'],
    ['Enhance Radius', '0'],
    ['Enhance Amount', '0.000'],
    ['Enhance denoise', '0'],
];

const RightDock = () => (
    <Dock $width="414px">
        <DockTitle>Shape Properties</DockTitle>
        <PropertyList>
            {shapeProps.map(([label, value]) => (
                <React.Fragment key={label}>
                    <Label htmlFor={label}>{label}</Label>
                    {value === null ? <Toggle id={label}/> : <SpinBox id={label} value={value} width="97px"/>}
                </React.Fragment>
            ))}
        </PropertyList>
        <Tabs $height="25px" $inset="1px">
            <Tab $width="48px">Move</Tab>
            <Tab $width="62px">Console</Tab>
            <Tab $width="99px">Camera Control</Tab>
            <Tab $width="85px">Variable Text</Tab>
            <Tab $width="107px" $active>Shape Properties</Tab>
        </Tabs>
        <DockTitle>Laser</DockTitle>
        <LaserBody>
            <Status>Disconnected</Status>
            <LaserRow>
                <Button><Icon name="pause" size={16}/>Pause</Button>
                <Button><Icon name="stop" size={16}/>Stop</Button>
                <Button><Icon name="play" size={16}/>Start</Button>
            </LaserRow>
            <LaserRow>
                <Button $height="23px"><Icon name="frameBox" size={17}/>Frame</Button>
                <Button $height="23px"><Icon name="frameRound" size={17}/>Frame</Button>
                <Button $height="23px">Save GCode</Button>
                <Button $height="23px">Run GCode</Button>
            </LaserRow>
            <LaserRow $gap="8px" $below="1px">
                <Button $width="94px"><Icon name="home" size={16}/>Home</Button>
                <Button $width="95px">Go to Origin</Button>
                <Label $width="94px" htmlFor="start-from">Start From:</Label>
                <Select id="start-from" value="Current Position"/>
            </LaserRow>
            <OriginRow>
                <ToggleList>
                    <label><Toggle/>Cut Selected Graphics</label>
                    <Label $off><Toggle disabled/>Use Selection Origin</Label>
                    <label><Toggle defaultChecked/>Optimize Cut Path</label>
                </ToggleList>
                <OriginSide>
                    <JobOrigin>
                        <span>Job Origin</span>
                        <OriginGrid role="radiogroup" aria-label="Job Origin">
                            {[...Array(9)].map((_, i) => (
                                <Radio key={i} name="origin" aria-label={`Origin ${i + 1}`} defaultChecked={i === 6}/>
                            ))}
                        </OriginGrid>
                    </JobOrigin>
                    <LaserRow $below="0">
                        <Button><Icon name="target" size={16}/>Show Last Position</Button>
                    </LaserRow>
                    <LaserRow $below="0">
                        <Button>Optimization Settings</Button>
                    </LaserRow>
                </OriginSide>
            </OriginRow>
            <LaserRow $gap="6px">
                <Button $width="74px">Devices</Button>
                <Select label="Port" value="(Choose)"/>
                <Select label="Device" value="SnapMaker"/>
            </LaserRow>
        </LaserBody>
        <Tabs $height="21px" $bottom>
            <Tab $width="52px" $active>Laser</Tab>
            <Tab $width="54px">Library</Tab>
        </Tabs>
    </Dock>
);

const TransformControls = () => (
    <TransformBar>
        <Handle/>
        <Pair $width="24px" $gap="2px">
            <Label htmlFor="xpos">XPos</Label>
            <Label htmlFor="ypos">YPos</Label>
        </Pair>
        <Pair $width="70px" $gap="2px">
            <SpinBox id="xpos" value="159.254" width="69px"/>
            <SpinBox id="ypos" value="236.463" width="69px"/>
        </Pair>
        <Pair $width="17px" $gap="2px"><span>mm</span><span>mm</span></Pair>
        <LockButton $active aria-label="Lock aspect"><Icon name="lock"/></LockButton>
        <Pair $width="33px" $justify="end">
            <Label htmlFor="width">Width</Label>
            <Label htmlFor="height">Height</Label>
        </Pair>
        <Pair $width="71px" $gap="3px">
            <SpinBox id="width" value="158.772" width="71px"/>
            <SpinBox id="height" value="105.848" width="71px"/>
        </Pair>
        <Pair $width="17px" $gap="4px"><span>mm</span><span>mm</span></Pair>
        <Pair $width="65px" $gap="8px">
            <SpinBox label="Width percent" value="100.000" width="65px"/>
            <SpinBox label="Height percent" value="100.000" width="65px"/>
        </Pair>
        <Pair $width="10px" $gap="4px"><span>%</span><span>%</span></Pair>
        <AnchorGrid role="radiogroup" aria-label="Anchor">
            {[...Array(9)].map((_, i) => (
                <Radio key={i} name="anchor" aria-label={`Anchor ${i + 1}`} defaultChecked={i === 4}/>
            ))}
        </AnchorGrid>
        <Pair $width="10px" $gap="4px"><span>R</span></Pair>
        <AlignGroup>
            <AlignRow>
                <Stepper off/>
                <Label htmlFor="align-x" $width="33px">Align X</Label>
                <Select id="align-x" value="Middle" width="60px" off/>
                <Select label="Mode" value="Normal" width="110px" off/>
            </AlignRow>
            <AlignRow>
                <Stepper off/>
                <Label htmlFor="align-y" $width="33px">Align Y</Label>
                <Select id="align-y" value="Middle" width="60px" off/>
                <Label htmlFor="offset">Offset</Label>
                <SpinBox id="offset" value="0" width="74px" off/>
            </AlignRow>
        </AlignGroup>
    </TransformBar>
);

const tools = ['cursor', 'pencil', 'square', 'circle', 'hexagon', 'polygon', 'frameTool', 'text', 'pin', 'ruler'];
const editTools = [['offset'], ['weld', 'union', 'subtract', 'intersect'], ['grid', 'radial'], ['startPoint', 'corner']];

const Tools = () => (
    <ToolColumn>
        <ToolSet>
            <Handle $across/>
            {tools.map((tool) => (
                <IconButton key={tool} $active={tool === 'cursor'} aria-label={tool}>
                    {tool === 'text' ? <BigLetter>A</BigLetter> : <Icon name={tool}/>}
                </IconButton>
            ))}
        </ToolSet>
        <ToolSet $last>
            <Handle $across/>
            {editTools.map((group, i) => (
                <React.Fragment key={group[0]}>
                    {i > 0 && <Divider $across/>}
                    {group.map((tool) => (
                        <IconButton key={tool} aria-label={tool}><Icon name={tool}/></IconButton>
                    ))}
                </React.Fragment>
            ))}
            <RadiusField>
                <Label htmlFor="radius" $align="left">Radius:</Label>
                <SpinBox id="radius" value="10.0" width="46px" off/>
            </RadiusField>
        </ToolSet>
    </ToolColumn>
);

const Desktop = () => (
    <Taskbar>
        <TaskSlot aria-label="Start">
            <svg width="16" height="16" viewBox="0 0 16 16"><path d="m0 2.3 6.5-.9v6.1H0zM7.3 1.3 16 0v7.5H7.3zM0 8.3h6.5v6.2L0 13.6zM7.3 8.3H16V16l-8.7-1.3z"/></svg>
        </TaskSlot>
        <TaskSlot aria-label="Search">
            <svg width="18" height="18" viewBox="0 0 18 18" fill="none" stroke="#000" strokeWidth="1.3"><circle cx="11" cy="7" r="5"/><path d="m7.5 10.5-6 6"/></svg>
        </TaskSlot>
        <TaskSlot aria-label="Cortana">
            <svg width="16" height="16" viewBox="0 0 16 16"><circle cx="8" cy="8" r="6.7" fill="none" stroke="#000" strokeWidth="2"/></svg>
        </TaskSlot>
        <TaskSlot aria-label="Task view">
            <svg width="17" height="16" viewBox="0 0 17 16" fill="none" stroke="#000" strokeWidth="1.2"><path d="M1 0v2.5h10V0M1 5.5h10v5.5H1zM1 16v-2.500h10V16M15 0v3M15 8v8"/><path d="M15 4v3" strokeWidth="3"/></svg>
        </TaskSlot>
        <TaskSlot $gap="3px" aria-label="Store">
            <svg width="24" height="24" viewBox="0 0 24 24">
                <path d="M6 7V2q0-1 1-1h10q1 0 1 1v5" fill="none" stroke="#333" strokeWidth="2"/>
                <path d="M1 6h22v16q0 2-2 2H3q-2 0-2-2z" fill="#2b2b2b"/>
                <path d="M8 11h4v4H8z" fill="#f25022"/>
                <path d="M13 11h4v4h-4z" fill="#7fba00"/>
                <path d="M8 16h4v4H8z" fill="#00a4ef"/>
                <path d="M13 16h4v4h-4z" fill="#ffb900"/>
            </svg>
        </TaskSlot>
        <TaskSlot $gap="1px" aria-label="Kd">
            <svg width="24" height="24" viewBox="0 0 24 24">
                <path d="M0 0h24v24H0z"/>
                <path d="M0 0h5v14H0z" fill="#dca01c"/>
                <path d="M7 0h17v7H7z" fill="#8b2414"/>
                <path d="M0 16h7v8H0z" fill="#28209a"/>
                <path d="M8 9h16v15H8z" fill="#dfe6c4"/>
                <text x="9" y="21" fontSize="11" fontWeight="bold" fontFamily="Liberation Sans, sans-serif">Kd</text>
            </svg>
        </TaskSlot>
        <RunningSlot aria-label="Chrome">
            <svg width="22" height="22" viewBox="0 0 22 22">
                <path d="M11 11 1.500 5.500a11 11 0 0 1 19 0z" fill="#db4437"/>
                <path d="M11 11V22A11 11 0 0 1 1.500 5.500z" fill="#0f9d58"/>
                <path d="M15.700 13.500 11 22a11 11 0 0 0 9.500-16.500H11V11z" fill="#ffcd40"/>
                <circle cx="11" cy="11" r="5.5" fill="#fff"/>
                <circle cx="11" cy="11" r="4.2" fill="#4285f4"/>
            </svg>
        </RunningSlot>
        <RunningSlot aria-label="Explorer">
            <svg width="22" height="20" viewBox="0 0 22 20">
                <path d="M1 1h8l2 2H1z" fill="#d9970c"/>
                <path d="M1 3h20v14H1z" fill="#ffd566"/>
                <path d="M5 11h13v8h-3v-4H8v4H5z" fill="#3a8fd6"/>
            </svg>
        </RunningSlot>
        <RunningSlot aria-label="Slicer">
            <svg width="24" height="24" viewBox="0 0 24 24">
                <circle cx="12" cy="12" r="12" fill="#fff"/>
                <path d="M6 16A7.500 7.500 0 0 1 17 6z" fill="#333"/>
                <path d="M7 18.500 18 8a7.500 7.500 0 0 1-11 10.500z" fill="#ed6b21"/>
            </svg>
        </RunningSlot>
        <TaskSlot $gap="1px" $active aria-label="LightBurn"><Logo size={24}/></TaskSlot>
        <Tray>
            <svg width="12" height="8" viewBox="0 0 12 8" fill="none" stroke="#000" strokeWidth="1.2"><path d="m.5 7 5.500-5.500L11.500 7"/></svg>
            <svg width="17" height="17" viewBox="0 0 17 17" fill="none" stroke="#000" strokeWidth="1.2"><path d="M6 14 11 2q1-1.500 2.500-.5T14 4L8 14l-2 1.500zM5 10q-4-1-4 2.500T6 14M9 13q3-3 4-3t0 2 3-3"/></svg>
            <Clock>03:51 p. m.<br/>08/04/2021</Clock>
            <svg width="26" height="26" viewBox="0 0 26 26">
                <path d="M1 3h16v11H1z"/>
                <path d="M4 6.500h10M4 9h10M4 11.500h6" stroke="#dcdfee"/>
                <circle cx="16" cy="17" r="8.5" fill="#ccc" stroke="#777"/>
                <text x="16" y="21" textAnchor="middle" fontSize="12" fontFamily="Roboto, sans-serif">12</text>
            </svg>
        </Tray>
    </Taskbar>
);

const App = () => (
    <>
        <GlobalStyle/>
        <Screen>
            <TitleBar>
                <Logo/>
                <span>Camaras - LightBurn 0.9.22</span>
                <WindowButtons>
                    <button aria-label="Minimize"><svg width="10" height="10" viewBox="0 0 10 10"><path d="M0 5.500h10" stroke="#777"/></svg></button>
                    <button aria-label="Restore"><svg width="10" height="10" viewBox="0 0 10 10"><path d="M.5 2.500h7v7h-7zM2.500 2V.5h7v7H8" stroke="#777" fill="none"/></svg></button>
                    <button aria-label="Close"><svg width="10" height="10" viewBox="0 0 10 10"><path d="m0 0 10 10M10 0 0 10" stroke="#777"/></svg></button>
                </WindowButtons>
            </TitleBar>
            <MenuBar>
                {['File', 'Edit', 'Tools', 'Arrange', 'Window', 'Language', 'Help'].map((item) => (
                    <a key={item} href="#menu">{item}</a>
                ))}
            </MenuBar>
            <Toolbar>
                <Handle/>
                {toolbarGroups.map((group, i) => (
                    <React.Fragment key={group[0]}>
                        {i > 0 && <Divider/>}
                        {group.map((tool) => (
                            <IconButton key={tool} aria-label={tool}><Icon name={tool}/></IconButton>
                        ))}
                    </React.Fragment>
                ))}
            </Toolbar>
            <TransformControls/>
            <Workspace>
                <Tools/>
                <LayersDock/>
                <Canvas>
                    {[320, 280, 240, 200, 160, 120, 80, 40, 0].map((mark) => <span key={mark}>{mark}</span>)}
                </Canvas>
                <RightDock/>
            </Workspace>
            <PaletteBar>
                <Handle/>
                {palette.map(([id, color, ink], i) => (
                    <ColorChip key={id} $color={color} $ink={ink} $active={i === 0}>{id}</ColorChip>
                ))}
                <Divider/>
                {toolPalette.map(([id, color, ink]) => (
                    <ColorChip key={id} $color={color} $ink={ink}>{id}</ColorChip>
                ))}
            </PaletteBar>
            <StatusBar>
                <span>x: -17.00, y: 248.00 mm</span>
                <span>Min (79.9x, 183.5y) to Max (238.6x, 289.4y)</span>
                <span>1 objects</span>
            </StatusBar>
            <Desktop/>
            <CutSettingsDialog/>
        </Screen>
    </>
);

export default App;
